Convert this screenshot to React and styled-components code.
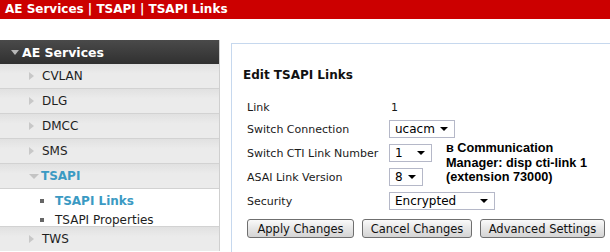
import React from "react";
import styled, { createGlobalStyle } from "styled-components";

const GlobalStyle = createGlobalStyle`
  html, body {
    margin: 0;
    padding: 0;
    background: #ffffff;
    font-family: "DejaVu Sans", Verdana, sans-serif;
    overflow: hidden;
  }
`;

const navItems = ["CVLAN", "DLG", "DMCC", "SMS"];

export default function App() {
  return (
    <>
      <GlobalStyle />
      <TopBar>AE Services | TSAPI | TSAPI Links</TopBar>
      <Main>
        <Sidebar>
          <NavHeader>
            <DownArrow $color="#b8b8b8" />
            AE Services
          </NavHeader>
          {navItems.map((item) => (
            <NavItem key={item}>
              <RightArrow />
              {item}
            </NavItem>
          ))}
          <NavItem $active>
            <DownArrow $color="#c4c4c4" $small />
            TSAPI
          </NavItem>
          <SubList>
            <SubItem $active>
              <Bullet />
              TSAPI Links
            </SubItem>
            <SubItem>
              <Bullet />
              TSAPI Properties
            </SubItem>
          </SubList>
          <NavItem $last>
            <RightArrow />
            TWS
          </NavItem>
        </Sidebar>

        <Panel>
          <Title>Edit TSAPI Links</Title>
          <Form>
            <Label>Link</Label>
            <Value>1</Value>

            <Label>Switch Connection</Label>
            <Cell $wide>
              <Select $width={66}>
                ucacm
                <Caret />
              </Select>
            </Cell>

            <Label>Switch CTI Link Number</Label>
            <Cell>
              <Select $width={43}>
                1
                <Caret />
              </Select>
            </Cell>
            <Note>
              в Communication
              <br />
              Manager: disp cti-link 1
              <br />
              (extension 73000)
            </Note>

            <Label>ASAI Link Version</Label>
            <Cell>
              <Select $width={34}>
                8
                <Caret />
              </Select>
            </Cell>

            <Label>Security</Label>
            <Cell $wide>
              <Select $width={106}>
                Encrypted
                <Caret />
              </Select>
            </Cell>
          </Form>
          <Buttons>
            <Button $width={107}>Apply Changes</Button>
            <Button $width={110}>Cancel Changes</Button>
            <Button $width={125}>Advanced Settings</Button>
          </Buttons>
        </Panel>
      </Main>
    </>
  );
}

const TopBar = styled.div`
  height: 19px;
  line-height: 19px;
  background-color: #cc0000;
  color: #ffffff;
  font-weight: bold;
  font-size: 12px;
  padding-left: 5px;
  white-space: nowrap;
`;

const Main = styled.div`
  display: flex;
  align-items: flex-start;
  margin-top: 21px;
  gap: 11px;
`;

const Sidebar = styled.div`
  width: 219px;
  flex-shrink: 0;
  border-right: 1px solid #cfcfcf;
  display: flex;
  flex-direction: column;
`;

const NavHeader = styled.div`
  height: 24px;
  display: flex;
  align-items: center;
  padding-left: 11px;
  gap: 3px;
  background: linear-gradient(#4a4a4a, #303030);
  color: #ffffff;
  font-weight: bold;
  font-size: 12.5px;
`;

const NavItem = styled.div`
  height: 24px;
  display: flex;
  align-items: center;
  padding-left: 29px;
  gap: 8px;
  background: linear-gradient(#e1e1e1, #ebebeb 40%, #ebebeb);
  border-bottom: ${(p) => (p.$last ? "none" : "1px solid #d2d2d2")};
  color: ${(p) => (p.$active ? "#3b9ac3" : "#1e1e1e")};
  font-weight: ${(p) => (p.$active ? "bold" : "normal")};
  font-size: 12px;
`;

const DownArrow = styled.span`
  width: 0;
  height: 0;
  border-left: ${(p) => (p.$small ? 5 : 4.5)}px solid transparent;
  border-right: ${(p) => (p.$small ? 5 : 4.5)}px solid transparent;
  border-top: 5px solid ${(p) => p.$color};
  margin-right: ${(p) => (p.$small ? -6 : 0)}px;
`;

const RightArrow = styled.span`
  width: 0;
  height: 0;
  border-top: 4.5px solid transparent;
  border-bottom: 4.5px solid transparent;
  border-left: 5px solid #c8c8c8;
`;

const SubList = styled.div`
  background: #ffffff;
  padding: 2px 0 0;
  height: 35px;
  border-bottom: 1px solid #d2d2d2;
`;

const SubItem = styled.div`
  height: 19px;
  display: flex;
  align-items: center;
  padding-left: 40px;
  gap: 11px;
  color: ${(p) => (p.$active ? "#3b9ac3" : "#1e1e1e")};
  font-weight: ${(p) => (p.$active ? "bold" : "normal")};
  font-size: 12px;
`;

const Bullet = styled.span`
  width: 4px;
  height: 4px;
  background: #666666;
`;

const Panel = styled.div`
  flex: 1;
  box-sizing: border-box;
  margin-top: 3px;
  height: 209px;
  border: 1px solid #c6d8ee;
  border-right: none;
  border-bottom: none;
  padding: 23px 0 0 11px;
`;

const Title = styled.div`
  font-weight: bold;
  font-size: 12px;
  line-height: 16px;
  color: #111111;
`;

const Form = styled.div`
  display: grid;
  grid-template-columns: 142px 59px auto;
  grid-template-rows: 20px repeat(4, 24px);
  margin-top: 14px;
  padding-left: 4px;
  font-size: 11px;
  color: #1a1a1a;
`;

const Label = styled.div`
  grid-column: 1;
  display: flex;
  align-items: center;
  white-space: nowrap;
`;

const Value = styled.div`
  grid-column: 2 / 4;
  display: flex;
  align-items: center;
  padding-left: 2px;
`;

const Cell = styled.div`
  grid-column: ${(p) => (p.$wide ? "2 / 4" : "2")};
  display: flex;
  align-items: center;
`;

const Select = styled.div`
  width: ${(p) => p.$width}px;
  height: 18px;
  box-sizing: border-box;
  border: 1px solid #b5b8c8;
  background: #ffffff;
  display: flex;
  align-items: center;
  justify-content: space-between;
  padding: 0 6px 0 5px;
  font-size: 12px;
  color: #000000;
`;

const Caret = styled.span`
  width: 0;
  height: 0;
  border-left: 4px solid transparent;
  border-right: 4px solid transparent;
  border-top: 4px solid #000000;
`;

const Note = styled.div`
  grid-column: 3;
  grid-row: 3 / 5;
  align-self: start;
  margin-top: 0;
  margin-left: -2px;
  font-family: "Liberation Sans", Arial, sans-serif;
  font-weight: bold;
  font-size: 12.7px;
  line-height: 14.5px;
  color: #000000;
  white-space: nowrap;
`;

const Buttons = styled.div`
  display: flex;
  gap: 8px;
  margin-top: 6px;
  padding-left: 4px;
`;

const Button = styled.button`
  width: ${(p) => p.$width}px;
  height: 19px;
  padding: 0;
  border: 1px solid #6f6f6f;
  border-radius: 3px;
  background: linear-gradient(#fafafa, #e6e6e6 50%, #d4d4d4);
  font-family: "DejaVu Sans", Verdana, sans-serif;
  font-size: 11.5px;
  color: #111111;
  white-space: nowrap;
`;
